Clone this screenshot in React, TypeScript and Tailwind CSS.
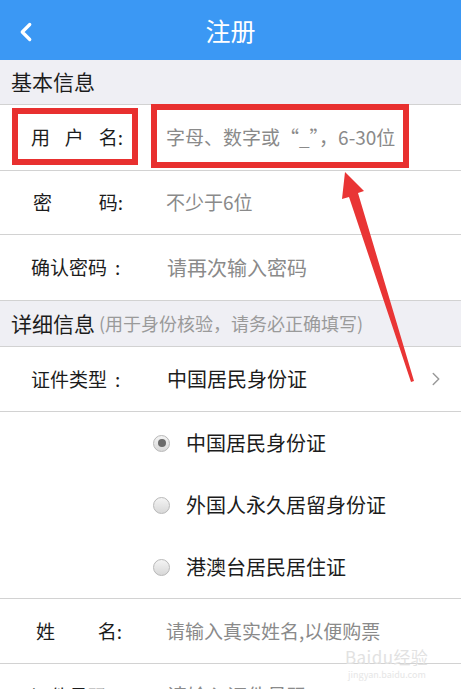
import { ChevronLeft, ChevronRight } from 'lucide-react';

const font = { fontFamily: '"Noto Sans CJK SC", "Noto Sans", sans-serif' };

function Label({ parts }: { parts: string[] }) {
  return (
    <div className="w-[92px] flex justify-between text-[19px] text-[#1c1c1c]">
      {parts.map((p, i) => (
        <span key={i}>{p}</span>
      ))}
    </div>
  );
}

function WideLabel({ text }: { text: string }) {
  return (
    <div className="w-[92px] flex text-[19px] text-[#1c1c1c]">
      <span>{text}</span>
      <span className="ml-[8px]">:</span>
    </div>
  );
}

function Radio({ checked, text }: { checked?: boolean; text: string }) {
  return (
    <div className="flex items-center h-[62px] pl-[153px]">
      <span className="w-[17px] h-[17px] rounded-full border border-[#b8b8b8] bg-gradient-to-b from-[#f4f4f4] to-[#d8d8d8] flex items-center justify-center">
        {checked && <span className="w-[8px] h-[8px] rounded-full bg-[#6a6a6a]" />}
      </span>
      <span className="ml-[16px] text-[20px] text-[#1c1c1c]">{text}</span>
    </div>
  );
}

export default function App() {
  return (
    <div className="relative w-[461px] h-[689px] overflow-hidden bg-white" style={font}>
      <div className="h-[60px] bg-[#3b98f4] flex items-center relative">
        <ChevronLeft size={30} strokeWidth={2.6} className="text-white absolute left-[11px] top-[17px]" />
        <div className="flex-1 text-center text-white text-[25px] pt-[2px]">注册</div>
      </div>

      <div className="h-[45px] bg-[#efeff4] border-b border-[#d2d2d2] flex items-center pl-[11px] text-[21px] text-[#1c1c1c]">
        基本信息
      </div>

      <div className="h-[66px] border-b border-[#d2d2d2] flex items-center pl-[31px]">
        <Label parts={['用', '户', '名:']} />
        <div className="ml-[43px] text-[19px] text-[#8a8a8a]">字母、数字或“_”，6-30位</div>
      </div>

      <div className="h-[64px] border-b border-[#d2d2d2] flex items-center pl-[33px]">
        <div className="w-[90px] flex justify-between text-[19px] text-[#1c1c1c]">
          <span>密</span>
          <span>码:</span>
        </div>
        <div className="ml-[43px] text-[19px] text-[#8a8a8a]">不少于6位</div>
      </div>

      <div className="h-[66px] border-b border-[#d2d2d2] flex items-center pl-[31px]">
        <WideLabel text="确认密码" />
        <div className="ml-[44px] text-[20px] text-[#8a8a8a]">请再次输入密码</div>
      </div>

      <div className="h-[46px] bg-[#efeff4] border-b border-[#d2d2d2] flex items-center pl-[11px]">
        <span className="text-[21px] text-[#1c1c1c]">详细信息</span>
        <span className="ml-[4px] text-[18px] text-[#9a9a9a]">(用于身份核验，请务必正确填写)</span>
      </div>

      <div className="h-[65px] border-b border-[#d2d2d2] flex items-center pl-[31px] pr-[14px]">
        <WideLabel text="证件类型" />
        <div className="ml-[44px] flex-1 text-[20px] text-[#1c1c1c]">中国居民身份证</div>
        <ChevronRight size={22} strokeWidth={1.6} className="text-[#9a9a9a]" />
      </div>

      <div className="h-[187px] border-b border-[#d2d2d2] flex flex-col justify-center">
        <Radio checked text="中国居民身份证" />
        <Radio text="外国人永久居留身份证" />
        <Radio text="港澳台居民居住证" />
      </div>

      <div className="h-[65px] border-b border-[#d2d2d2] flex items-center pl-[36px]">
        <div className="w-[86px] flex justify-between text-[19px] text-[#1c1c1c]">
          <span>姓</span>
          <span>名:</span>
        </div>
        <div className="ml-[44px] text-[19px] text-[#8a8a8a]">请输入真实姓名,以便购票</div>
      </div>

      <div className="h-[65px] border-b border-[#d2d2d2] flex items-center pl-[31px]">
        <WideLabel text="证件号码" />
        <div className="ml-[44px] text-[20px] text-[#8a8a8a]">请输入证件号码</div>
      </div>

      {/* red annotation boxes */}
      <div className="absolute left-[12px] top-[108px] w-[126px] h-[57px] border-[6px] border-[#e8302f]" />
      <div className="absolute left-[151px] top-[104px] w-[258px] h-[64px] border-[6px] border-[#e8302f]" />

      <svg className="absolute left-0 top-0" width="461" height="689" viewBox="0 0 461 689">
        <polygon
          points="345,172 364,191 358,193 414,381 411,382 349,197 342,199"
          fill="#e93535"
        />
      </svg>

      <div className="absolute left-[345px] top-[648px] text-[17px] leading-none text-[#e2e2e2] tracking-wide">Baidu经验</div>
      <div className="absolute left-[348px] top-[670px] text-[9px] leading-none text-[#e6e6e6]">jingyan.baidu.com</div>
    </div>
  );
}
